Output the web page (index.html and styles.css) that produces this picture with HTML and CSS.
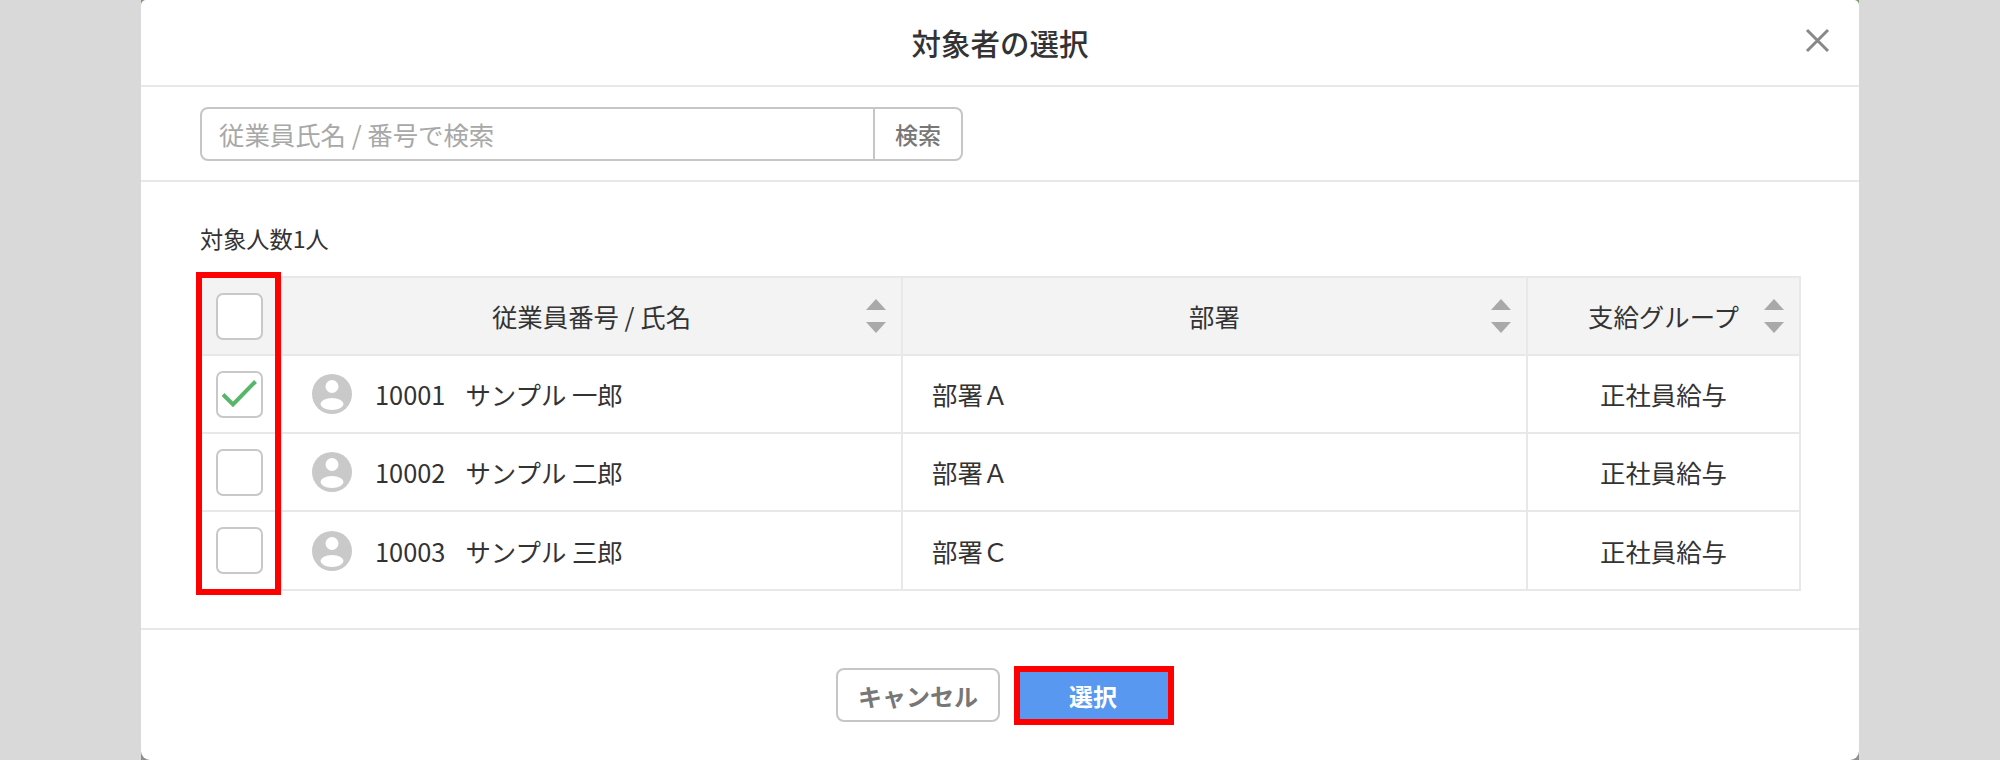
FILE: index.html
```html
<!DOCTYPE html>
<html lang="ja">
<head>
<meta charset="utf-8">
<title>対象者の選択</title>
<link rel="stylesheet" href="styles.css">
</head>
<body>
<div class="modal-backing">
<div class="modal">
  <header class="modal-header">
    <h1 class="modal-title">対象者の選択</h1>
    <svg class="close-icon" width="25" height="25" viewBox="0 0 25 25"><path d="M2 2 L23 23 M23 2 L2 23" /></svg>
  </header>
  <section class="search-bar">
    <div class="search-field">
      <div class="search-input">従業員氏名 / 番号で検索</div>
      <div class="search-button">検索</div>
    </div>
  </section>
  <section class="modal-body">
    <p class="count">対象人数1人</p>
    <div class="table-wrap">
      <table class="staff-table">
        <colgroup><col class="col-check"><col class="col-name"><col class="col-dept"><col class="col-group"></colgroup>
        <thead>
          <tr>
            <th class="cell-check"><span class="checkbox"></span></th>
            <th><div class="th-inner"><span>従業員番号 / 氏名</span><span class="sort"><i class="up"></i><i class="down"></i></span></div></th>
            <th><div class="th-inner"><span>部署</span><span class="sort"><i class="up"></i><i class="down"></i></span></div></th>
            <th><div class="th-inner"><span>支給グループ</span><span class="sort"><i class="up"></i><i class="down"></i></span></div></th>
          </tr>
        </thead>
        <tbody>
          <tr>
            <td class="cell-check"><span class="checkbox"><svg width="38" height="32" viewBox="0 0 38 32"><path class="tick" d="M3 16.5 L13 26.5 L35.5 3.5"/></svg></span></td>
            <td><div class="person"><svg class="avatar" width="40" height="40" viewBox="0 0 40 40"><circle class="av-bg" cx="20" cy="20" r="20"/><circle class="av-fg" cx="20" cy="12.5" r="6.5"/><ellipse class="av-fg" cx="20" cy="30" rx="11.5" ry="6"/></svg><span class="emp-no">10001</span><span>サンプル 一郎</span></div></td>
            <td class="cell-dept">部署Ａ</td>
            <td class="cell-group">正社員給与</td>
          </tr>
          <tr>
            <td class="cell-check"><span class="checkbox"></span></td>
            <td><div class="person"><svg class="avatar" width="40" height="40" viewBox="0 0 40 40"><circle class="av-bg" cx="20" cy="20" r="20"/><circle class="av-fg" cx="20" cy="12.5" r="6.5"/><ellipse class="av-fg" cx="20" cy="30" rx="11.5" ry="6"/></svg><span class="emp-no">10002</span><span>サンプル 二郎</span></div></td>
            <td class="cell-dept">部署Ａ</td>
            <td class="cell-group">正社員給与</td>
          </tr>
          <tr>
            <td class="cell-check"><span class="checkbox"></span></td>
            <td><div class="person"><svg class="avatar" width="40" height="40" viewBox="0 0 40 40"><circle class="av-bg" cx="20" cy="20" r="20"/><circle class="av-fg" cx="20" cy="12.5" r="6.5"/><ellipse class="av-fg" cx="20" cy="30" rx="11.5" ry="6"/></svg><span class="emp-no">10003</span><span>サンプル 三郎</span></div></td>
            <td class="cell-dept">部署Ｃ</td>
            <td class="cell-group">正社員給与</td>
          </tr>
        </tbody>
      </table>
      <div class="highlight-col"></div>
    </div>
  </section>
  <footer class="modal-footer">
    <div class="btn btn-cancel">キャンセル</div>
    <div class="btn btn-select">選択</div>
  </footer>
</div>
</div>
</body>
</html>
```
FILE: styles.css
```css
* { box-sizing: border-box; }
html, body { margin: 0; height: 760px; overflow: hidden; }
body {
  background: #d9d9d9;
  font-family: "Noto Sans CJK JP", "Noto Sans", sans-serif;
  color: #333;
  padding: 0 141px;
}
.modal-backing {
  height: 760px;
  background: linear-gradient(#7f9a66 0, #7f9a66 20px, #8f8f8f 20px);
}
.modal {
  height: 760px;
  background: #fff;
  border-radius: 5px 5px 9px 9px;
  display: flex;
  flex-direction: column;
}
.modal-header {
  height: 87px;
  border-bottom: 2px solid #e8e8e8;
  display: flex;
  align-items: center;
  justify-content: center;
  position: relative;
}
.modal-title { margin: 0; font-size: 29.5px; font-weight: 500; color: #333; line-height: 1; }
.close-icon { position: absolute; right: 29px; top: 28px; }
.close-icon path { stroke: #888; stroke-width: 3; fill: none; }
.search-bar {
  height: 95px;
  border-bottom: 2px solid #e8e8e8;
  padding: 20px 0 0 59px;
}
.search-field { display: flex; width: 763px; height: 54px; }
.search-input {
  flex: 1;
  border: 2px solid #c6c6c6;
  border-radius: 8px 0 0 8px;
  padding-left: 17px;
  font-size: 25.4px;
  color: #a8a8a8;
  display: flex;
  align-items: center;
}
.search-button {
  width: 88px;
  border: 2px solid #c6c6c6;
  border-left: 0;
  border-radius: 0 8px 8px 0;
  font-size: 23px;
  font-weight: 500;
  color: #777;
  display: flex;
  align-items: center;
  justify-content: center;
}
.modal-body { height: 448px; border-bottom: 2px solid #e8e8e8; padding: 41px 58px 0 59px; }
.count { margin: 0 0 23px; font-size: 23.2px; line-height: 30px; color: #333; }
.table-wrap { position: relative; }
.staff-table {
  border-collapse: collapse;
  table-layout: fixed;
  width: 1600px;
  font-size: 25.4px;
  color: #333;
}
.col-check { width: 81px; }
.col-name { width: 621px; }
.col-dept { width: 625px; }
.col-group { width: 273px; }
.staff-table th, .staff-table td { border: 2px solid #e8e8e8; padding: 0; height: 78px; font-weight: 400; }
.staff-table tbody tr:last-child td { height: 79px; }
.staff-table th { background: #f3f3f3; }
.staff-table tr > :first-child { border-left: 0; }
.staff-table .cell-check { text-align: center; vertical-align: middle; padding-right: 2px; }
.checkbox {
  display: inline-flex;
  align-items: center;
  justify-content: center;
  width: 47px;
  height: 47px;
  background: #fff;
  border: 2px solid #c8c8c8;
  border-radius: 7px;
  vertical-align: middle;
}
.tick { fill: none; stroke: #56b76b; stroke-width: 4; }
.th-inner { position: relative; display: flex; justify-content: center; align-items: center; height: 76px; }
.sort { position: absolute; right: 15px; top: 21px; display: flex; flex-direction: column; gap: 12px; }
.sort i { display: block; width: 0; height: 0; border-left: 10px solid transparent; border-right: 10px solid transparent; }
.sort .up { border-bottom: 11px solid #a9a9a9; }
.sort .down { border-top: 11px solid #a9a9a9; }
.person { display: flex; align-items: center; padding-left: 30px; }
.avatar { margin-right: 23px; flex: none; }
.av-bg { fill: #c9c9c9; }
.av-fg { fill: #fff; }
.emp-no { margin-right: 20px; }
.staff-table .cell-dept { padding-left: 29px; }
.cell-group { text-align: center; }
.highlight-col {
  position: absolute;
  left: -4px;
  top: -4px;
  width: 85px;
  height: 323px;
  border: 6px solid #f00;
}
.modal-footer { flex: 1; display: flex; justify-content: center; align-items: flex-start; padding: 36px 0 0 10px; gap: 14px; }
.btn { display: flex; align-items: center; justify-content: center; font-weight: 700; font-size: 24px; }
.btn-cancel { width: 164px; height: 54px; margin-top: 2px; border: 2px solid #c6c6c6; border-radius: 8px; color: #777; }
.btn-select { width: 160px; height: 59px; padding-right: 2px; background: #5898f0; border: 6px solid #f00; color: #fff; }
```
